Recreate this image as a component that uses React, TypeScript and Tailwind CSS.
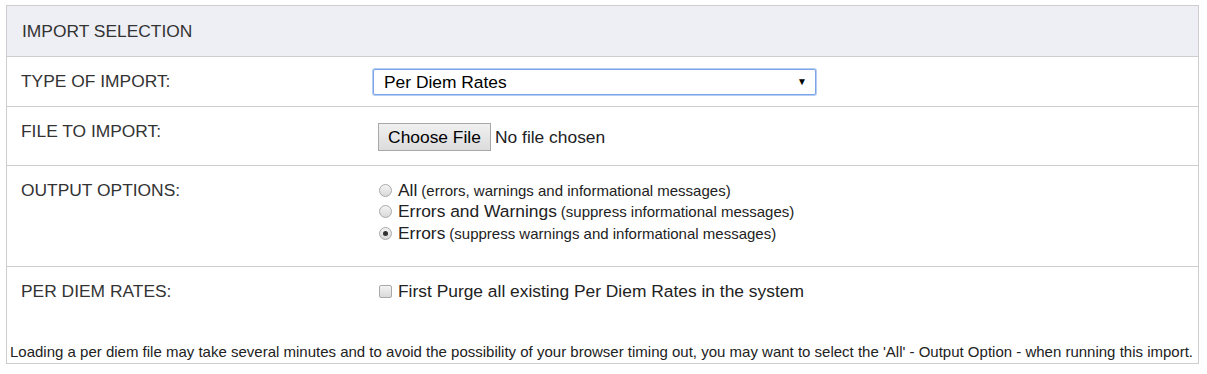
import React from "react"

const FONT = "font-['Liberation_Sans',Arial,sans-serif]"

function Radio({ checked }: { checked?: boolean }) {
  return (
    <span className="mt-[4px] mr-[6px] flex h-[13px] w-[13px] shrink-0 items-center justify-center rounded-full border border-[#a9a9a9] bg-gradient-to-b from-[#f4f4f4] to-[#d9d9d9]">
      {checked && <span className="h-[5px] w-[5px] rounded-full bg-[#333]" />}
    </span>
  )
}

function Row({ label, children, className = "" }: { label: string; children: React.ReactNode; className?: string }) {
  return (
    <div className={`flex border-b border-[#cfcccf] ${className}`}>
      <div className="w-[366px] shrink-0 pl-[14px] pt-[14px] text-[17.4px] leading-[20px] text-[#333]">{label}</div>
      <div className="flex-1">{children}</div>
    </div>
  )
}

export default function App() {
  return (
    <div className={`${FONT} bg-white pt-[5px] pl-[6px]`}>
      <div className="w-[1193px] border border-[#cfcccf]">
        {/* header */}
        <div className="h-[51px] border-b border-[#cfcccf] bg-[#eeeff4] pl-[15px] pt-[15px] text-[17.4px] leading-[20px] text-[#333]">
          IMPORT SELECTION
        </div>

        <Row label="TYPE OF IMPORT:" className="h-[50px]">
          <div className="pt-[12px]">
            <div className="relative flex h-[26px] w-[443px] items-center rounded-[2px] border border-[#7ca4e8] bg-white pl-[10px] text-[17.4px] text-black shadow-[0_0_0_1px_#b7cef4]">
              Per Diem Rates
              <span className="absolute right-[8px] top-[5px] text-[10px] leading-[14px]">▼</span>
            </div>
          </div>
        </Row>

        <Row label="FILE TO IMPORT:" className="h-[59px]">
          <div className="flex items-center pt-[16px] pl-[5px] text-[17.4px] text-[#222]">
            <span className="flex h-[28px] w-[113px] items-center justify-center border border-[#a8a8a8] bg-gradient-to-b from-[#f0f0f0] to-[#dcdcdc] text-black">
              Choose File
            </span>
            <span className="ml-[4px]">No file chosen</span>
          </div>
        </Row>

        <Row label="OUTPUT OPTIONS:" className="h-[101px]">
          <div className="flex flex-col pt-[14px] pl-[6px] text-[#222]">
            <div className="flex h-[21px] items-start">
              <Radio />
              <span className="text-[17.4px] leading-[20px]">All</span>
              <span className="ml-[4px] text-[15px] leading-[21px]">(errors, warnings and informational messages)</span>
            </div>
            <div className="flex h-[22px] items-start">
              <Radio />
              <span className="text-[17.4px] leading-[20px]">Errors and Warnings</span>
              <span className="ml-[4px] text-[15px] leading-[21px]">(suppress informational messages)</span>
            </div>
            <div className="flex h-[21px] items-start">
              <Radio checked />
              <span className="text-[17.4px] leading-[20px]">Errors</span>
              <span className="ml-[4px] text-[15px] leading-[21px]">(suppress warnings and informational messages)</span>
            </div>
          </div>
        </Row>

        <div className="flex h-[77px]">
          <div className="w-[366px] shrink-0 pl-[14px] pt-[14px] text-[17.4px] leading-[20px] text-[#333]">PER DIEM RATES:</div>
          <div className="flex items-start pt-[14px] pl-[6px] text-[17.4px] leading-[20px] text-[#222]">
            <span className="mt-[4px] mr-[6px] h-[13px] w-[13px] shrink-0 rounded-[2px] border border-[#a9a9a9] bg-gradient-to-b from-[#f4f4f4] to-[#d9d9d9]" />
            First Purge all existing Per Diem Rates in the system
          </div>
        </div>

        <div className="pl-[3px] pb-[3px] text-[15px] leading-[16px] text-[#222] whitespace-nowrap">
          Loading a per diem file may take several minutes and to avoid the possibility of your browser timing out, you may want to select the 'All' - Output Option - when running this import.
        </div>
      </div>
    </div>
  )
}
